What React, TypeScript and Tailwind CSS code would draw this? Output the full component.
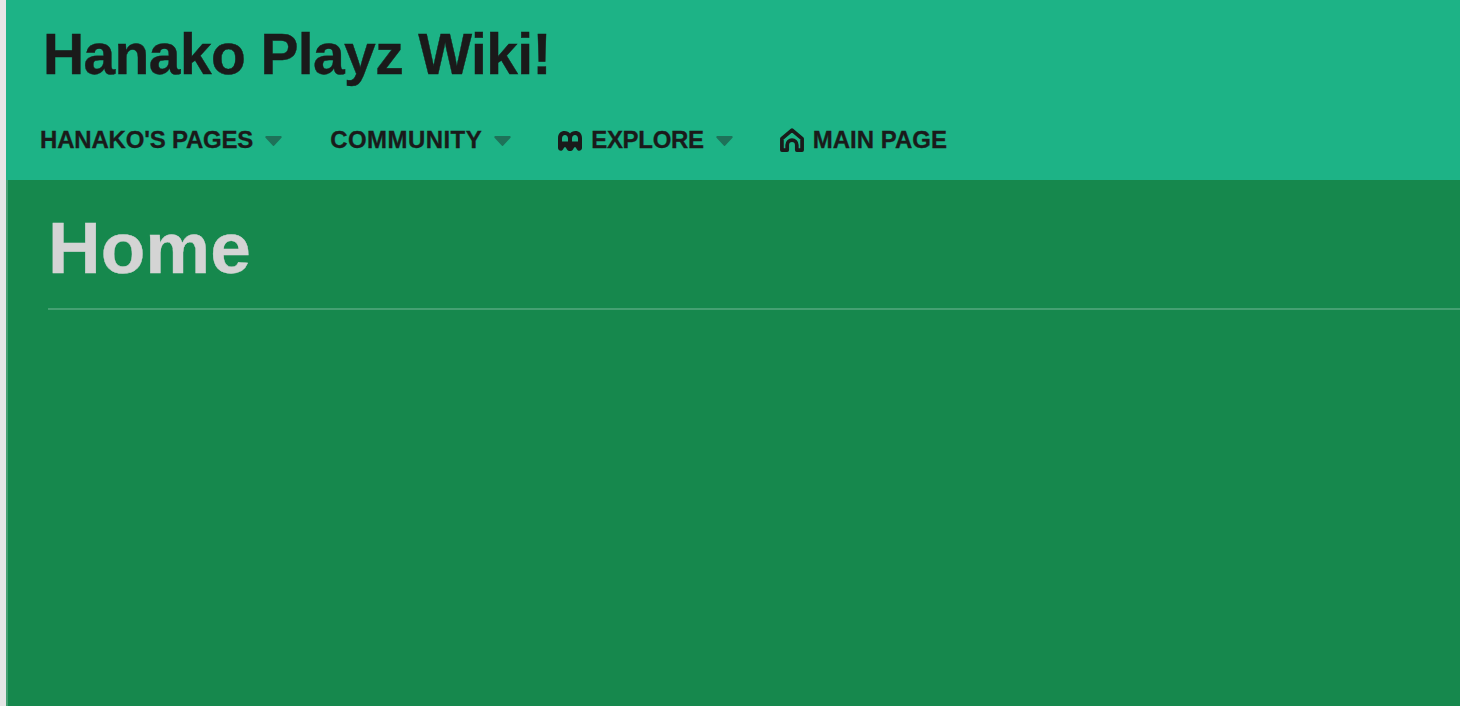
import React from 'react';

const Caret: React.FC = () => (
    <svg width="17" height="10" viewBox="0 0 17 10" className="ml-3 mt-0.5" aria-hidden="true">
        <path d="M1.3 0h14.400a1.100 1.100 0 0 1 .8 1.800L9.300 9.600a1.100 1.100 0 0 1-1.600 0L.5 1.800A1.100 1.100 0 0 1 1.300 0z" fill="#1e7259" />
    </svg>
);

const ExploreIcon: React.FC = () => (
    <svg width="24" height="20" viewBox="0 0 24 20" className="mr-[9px] mt-[1px]" aria-hidden="true">
        <path
            d="M0 17V7C0 2.500 3 0 6.500 0 9 0 11 1 12 2.500 13 1 15 0 17.500 0 21 0 24 2.500 24 7v10c0 2.500-3.500 3.800-5 1.500-.8-1.300-1.400-2.500-2-2.500s-1.200 1.200-2 2.500c-1.300 2-4.700 2-6 0-.8-1.300-1.400-2.500-2-2.500s-1.200 1.200-2 2.500C3.500 20.800 0 19.500 0 17zM4 10.500h6V7.500c0-2-1.300-3.500-3-3.500S4 5.500 4 7.500zM14 10.500h6V7.500c0-2-1.300-3.500-3-3.500s-3 1.500-3 3.500z"
            fill="#1a1a1a"
            fillRule="evenodd"
        />
    </svg>
);

const HomeIcon: React.FC = () => (
    <svg width="24" height="24" viewBox="0 0 24 24" className="mr-[9px]" aria-hidden="true">
        <path
            d="M7.200 22.100H1.900V10.700L12 2.200l10.100 8.500v11.400h-5.300V17a4.800 4.800 0 0 0-9.600 0z"
            fill="none"
            stroke="#1a1a1a"
            strokeWidth="3.700"
            strokeLinejoin="round"
        />
    </svg>
);

const NavItem: React.FC<{ label: string; icon?: React.ReactNode; caret?: boolean; textClass?: string }> = ({ label, icon, caret, textClass }) => (
    <div className="flex items-center text-[24px] font-bold text-[#1a1a1a] whitespace-nowrap [-webkit-text-stroke:0.3px_#1a1a1a]">
        {icon}
        <span className={textClass}>{label}</span>
        {caret && <Caret />}
    </div>
);

const App: React.FC = () => {
    return (
        <div className="h-[706px] w-[1460px] overflow-hidden bg-[#e6e6e6] pl-1.5 font-['Liberation_Sans',Arial,sans-serif]">
            <header className="h-[180px] bg-[#1db386] pl-[34px]">
                <h1 className="pl-[3px] pt-[19px] text-[57px] font-bold leading-[70px] tracking-[-0.62px] text-[#1a1a1a] [-webkit-text-stroke:0.4px_#1a1a1a]">Hanako Playz Wiki!</h1>
                <nav className="mt-[37px] flex h-[28px] items-center gap-[47px]">
                    <NavItem label="HANAKO'S PAGES" textClass="tracking-[-0.2px]" caret />
                    <NavItem label="COMMUNITY" textClass="ml-px tracking-[0.45px]" caret />
                    <NavItem label="EXPLORE" textClass="tracking-[-0.3px]" icon={<ExploreIcon />} caret />
                    <NavItem label="MAIN PAGE" icon={<HomeIcon />} />
                </nav>
            </header>
            <main className="h-[526px] border-l-2 border-[#45a072] bg-[#16884d] pl-10">
                <h2 className="border-b-2 border-[#45a072] pb-[20px] pt-[28px] text-[73px] font-bold leading-[80px] text-[#d4d4d4] [-webkit-text-stroke:0.4px_#d4d4d4]">Home</h2>
            </main>
        </div>
    );
};

export default App;
